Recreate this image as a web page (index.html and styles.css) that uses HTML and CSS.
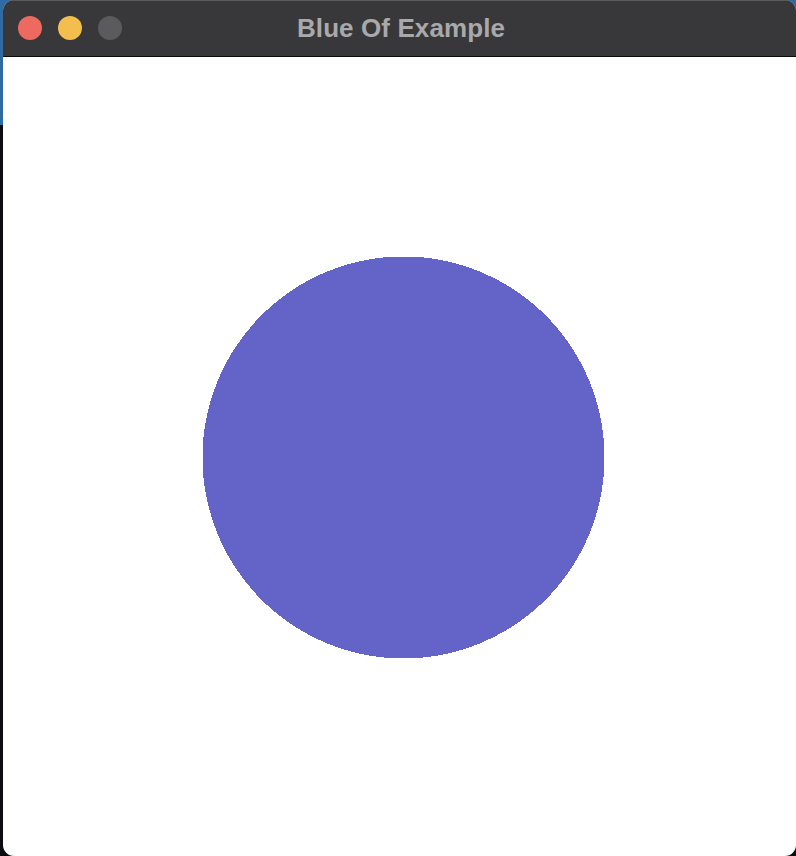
FILE: index.html
```html
<!DOCTYPE html>
<html>
<head>
<meta charset="utf-8">
<link rel="stylesheet" href="styles.css">
</head>
<body>
<div class="desktop">
  <div class="window">
    <div class="titlebar">
      <div class="lights">
        <span class="light red"></span>
        <span class="light yellow"></span>
        <span class="light grey"></span>
      </div>
      <div class="title">Blue Of Example</div>
    </div>
    <div class="content">
      <svg class="circle" width="403" height="403" viewBox="0 0 403 403" shape-rendering="crispEdges">
        <circle cx="201.5" cy="201.5" r="201" fill="#6464c8"/>
      </svg>
    </div>
  </div>
</div>
</body>
</html>
```
FILE: styles.css
```css
html, body {
  margin: 0;
  padding: 0;
  width: 796px;
  height: 856px;
  overflow: hidden;
}
body {
  background: linear-gradient(to bottom, #2f6aa3 0, #2f6aa3 125px, #0b0d12 125px);
}
.desktop {
  display: flex;
  height: 856px;
  padding-left: 3px;
}
.window {
  flex: 1;
  display: flex;
  flex-direction: column;
  border-radius: 11px;
  overflow: hidden;
  background: #ffffff;
}
.titlebar {
  position: relative;
  flex: none;
  background: #38383a;
  border-top: 1px solid #5a5a5c;
  border-bottom: 1px solid #0c0c0c;
  box-sizing: border-box;
  height: 57px;
  display: flex;
  align-items: center;
  justify-content: center;
}
.lights {
  position: absolute;
  left: 15px;
  top: 15px;
  display: flex;
  gap: 16px;
}
.light {
  width: 24px;
  height: 24px;
  border-radius: 50%;
  display: block;
}
.red { background: #ec6a5f; }
.yellow { background: #f4be4f; }
.grey { background: #5b5b5d; }
.title {
  font-family: "Liberation Sans", Arial, sans-serif;
  font-weight: bold;
  font-size: 26px;
  letter-spacing: 0.1px;
  color: #a9a9ab;
  margin-left: 3px;
  margin-top: -1px;
}
.content {
  flex: 1;
  padding-top: 199px;
  padding-left: 199px;
}
.circle {
  display: block;
}
```
